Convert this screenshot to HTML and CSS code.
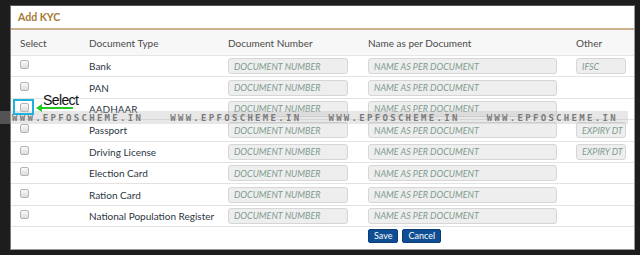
FILE: index.html
```html
<!DOCTYPE html>
<html>
<head>
<meta charset="utf-8">
<link rel="stylesheet" href="styles.css">
</head>
<body>
<div class="panel">
  <div class="title">Add KYC</div>
  <div class="grid">
    <div class="row head">
      <div class="c1">Select</div>
      <div class="c2">Document Type</div>
      <div class="c3">Document Number</div>
      <div class="c4">Name as per Document</div>
      <div class="c5">Other</div>
    </div>
    <div class="row">
      <div class="c1"><input type="checkbox" class="cb"></div>
      <div class="c2">Bank</div>
      <div class="c3"><input class="in num" placeholder="DOCUMENT NUMBER"></div>
      <div class="c4"><input class="in name" placeholder="NAME AS PER DOCUMENT"></div>
      <div class="c5"><input class="in other" placeholder="IFSC"></div>
    </div>
    <div class="row">
      <div class="c1"><input type="checkbox" class="cb"></div>
      <div class="c2">PAN</div>
      <div class="c3"><input class="in num" placeholder="DOCUMENT NUMBER"></div>
      <div class="c4"><input class="in name" placeholder="NAME AS PER DOCUMENT"></div>
      <div class="c5"></div>
    </div>
    <div class="row">
      <div class="c1"><input type="checkbox" class="cb"></div>
      <div class="c2">AADHAAR</div>
      <div class="c3"><input class="in num" placeholder="DOCUMENT NUMBER"></div>
      <div class="c4"><input class="in name" placeholder="NAME AS PER DOCUMENT"></div>
      <div class="c5"></div>
    </div>
    <div class="row">
      <div class="c1"><input type="checkbox" class="cb"></div>
      <div class="c2">Passport</div>
      <div class="c3"><input class="in num" placeholder="DOCUMENT NUMBER"></div>
      <div class="c4"><input class="in name" placeholder="NAME AS PER DOCUMENT"></div>
      <div class="c5"><input class="in other" placeholder="EXPIRY DT"></div>
    </div>
    <div class="row">
      <div class="c1"><input type="checkbox" class="cb"></div>
      <div class="c2">Driving License</div>
      <div class="c3"><input class="in num" placeholder="DOCUMENT NUMBER"></div>
      <div class="c4"><input class="in name" placeholder="NAME AS PER DOCUMENT"></div>
      <div class="c5"><input class="in other" placeholder="EXPIRY DT"></div>
    </div>
    <div class="row">
      <div class="c1"><input type="checkbox" class="cb"></div>
      <div class="c2">Election Card</div>
      <div class="c3"><input class="in num" placeholder="DOCUMENT NUMBER"></div>
      <div class="c4"><input class="in name" placeholder="NAME AS PER DOCUMENT"></div>
      <div class="c5"></div>
    </div>
    <div class="row">
      <div class="c1"><input type="checkbox" class="cb"></div>
      <div class="c2">Ration Card</div>
      <div class="c3"><input class="in num" placeholder="DOCUMENT NUMBER"></div>
      <div class="c4"><input class="in name" placeholder="NAME AS PER DOCUMENT"></div>
      <div class="c5"></div>
    </div>
    <div class="row">
      <div class="c1"><input type="checkbox" class="cb"></div>
      <div class="c2">National Population Register</div>
      <div class="c3"><input class="in num" placeholder="DOCUMENT NUMBER"></div>
      <div class="c4"><input class="in name" placeholder="NAME AS PER DOCUMENT"></div>
      <div class="c5"></div>
    </div>
    <div class="foot">
      <button class="btn">Save</button>
      <button class="btn">Cancel</button>
    </div>
  </div>
</div>

<div class="watermark">
  <span class="wm">WWW.EPFOSCHEME.IN</span>
  <span class="wm">WWW.EPFOSCHEME.IN</span>
  <span class="wm">WWW.EPFOSCHEME.IN</span>
  <span class="wm">WWW.EPFOSCHEME.IN</span>
</div>

<div class="hl-box"></div>
<svg class="arrow" width="40" height="10" viewBox="0 0 40 10">
  <path d="M1 5 L7 1 L7 4 L38 4 L38 6 L7 6 L7 9 Z" fill="#22cc22"/>
</svg>
<div class="note">Select</div>
</body>
</html>
```

FILE: styles.css
```css
html, body {
  margin: 0;
  padding: 0;
}
body {
  width: 640px;
  height: 255px;
  background: #1d1d1d;
  position: relative;
  overflow: hidden;
  font-family: Lato, "Open Sans", "Liberation Sans", sans-serif;
}
.panel {
  position: relative;
  margin: 5px 0 0 10px;
  width: 625px;
  height: 245px;
  background: #fff;
  box-sizing: border-box;
  border: 1px solid #9a9a9a;
  border-top-color: #555;
  border-left-color: #777;
}
.title {
  height: 22px;
  line-height: 22px;
  padding-left: 7px;
  font-size: 10.5px;
  font-weight: bold;
  color: #a47a36;
  border-bottom: 2px solid #cdb090;
}
.grid {
  display: flex;
  flex-direction: column;
}
.row {
  display: grid;
  grid-template-columns: 78px 139px 140px 208px 1fr;
  align-items: center;
  height: 20.4px;
  border-bottom: 1px solid #e3e3e3;
  font-size: 10px;
  color: #2c3642;
}
.row.head {
  height: 25px;
  background: #f7f7f7;
  color: #4a4a4a;
  border-bottom: 1px solid #e6e6e6;
}
.c1 {
  padding-left: 9px;
  display: flex;
  align-items: center;
}
.cb {
  appearance: none;
  -webkit-appearance: none;
  margin: -3px 0 0 0;
  width: 7px;
  height: 7px;
  border: 1px solid #b4b4b4;
  border-radius: 2px;
  background: linear-gradient(#fafafa, #dcdcdc);
  box-sizing: content-box;
}
.in {
  display: block;
  box-sizing: border-box;
  height: 16px;
  margin: 0;
  padding: 0 0 0 5px;
  border: 1px solid #d6d6d6;
  border-radius: 3px;
  background: #eeeeee;
  font-family: Lato, "Open Sans", sans-serif;
  font-size: 9px;
  font-style: italic;
  outline: none;
}
.in::placeholder {
  color: #7f9c8f;
  opacity: 1;
}
.num { width: 120px; }
.name { width: 189px; }
.other { width: 50px; }
.foot {
  display: flex;
  gap: 4px;
  padding: 2px 0 0 357px;
}
.btn {
  height: 14px;
  margin: 0;
  padding: 0 5px;
  border: 1px solid #0a3d75;
  border-radius: 2px;
  background: #0f4e92;
  color: #fff;
  font-family: Lato, "Open Sans", sans-serif;
  font-size: 9px;
  line-height: 12px;
}
.watermark {
  position: absolute;
  left: 0;
  top: 111px;
  width: 628px;
  height: 13px;
  background: rgba(185, 185, 185, 0.35);
  display: flex;
  align-items: center;
  gap: 27px;
  padding-left: 12px;
  box-sizing: border-box;
  white-space: nowrap;
}
.wm {
  font-family: "DejaVu Sans Mono", "Liberation Mono", monospace;
  font-weight: bold;
  font-size: 9px;
  letter-spacing: 2.3px;
  color: #7a7a7a;
}
.hl-box {
  position: absolute;
  left: 13px;
  top: 99px;
  width: 21px;
  height: 16px;
  box-sizing: border-box;
  border: 2px solid #1fb3dc;
}
.arrow {
  position: absolute;
  left: 35px;
  top: 103px;
}
.note {
  position: absolute;
  left: 43px;
  top: 92px;
  font-family: "Liberation Sans", Arial, sans-serif;
  font-size: 14px;
  letter-spacing: -0.6px;
  color: #111;
}
```
